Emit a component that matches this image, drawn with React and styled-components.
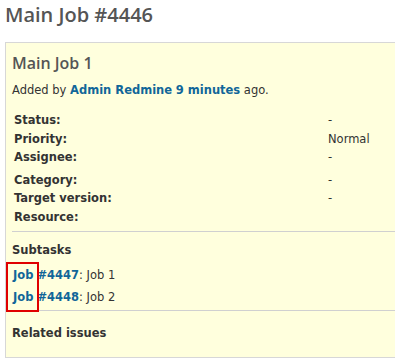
import styled, { createGlobalStyle } from "styled-components";

const Global = createGlobalStyle`
    body {
        margin: 0;
        background: #fff;
        font-family: "DejaVu Sans", Verdana, sans-serif;
        font-size: 12px;
        color: #333;
    }
`;

const Page = styled.div`
    padding: 3px 0 0 5px;
`;

const Title = styled.h2`
    margin: 0 0 15px 0;
    font-family: "Open Sans", "Trebuchet MS", sans-serif;
    font-size: 20px;
    font-weight: 600;
    color: #555;
    line-height: 24px;
`;

const IssueBox = styled.div`
    background: #ffffdd;
    border: 1px solid #d7d7d7;
    border-right: none;
    padding: 4px 0 7px 6px;
`;

const Subject = styled.h3`
    margin: 6px 0 9px 0;
    font-family: "Open Sans", "Trebuchet MS", sans-serif;
    font-size: 16px;
    font-weight: 600;
    color: #555;
    line-height: 20px;
`;

const Author = styled.p`
    margin: 0 0 14px 0;
    font-size: 11.5px;
    line-height: 16px;
`;

const Link = styled.a`
    color: #169;
    font-weight: bold;
    text-decoration: none;
`;

const Attributes = styled.div`
    display: flex;
    flex-direction: column;
    gap: ${(p) => p.$gap || 0}px;
    padding: 0 0 0 2px;
`;

const AttrGroup = styled.div`
    display: grid;
    grid-template-columns: 314px 1fr;
    row-gap: 1.5px;
`;

const Label = styled.div`
    font-weight: bold;
    font-size: 11.5px;
    line-height: 17px;
`;

const Value = styled.div`
    font-size: 11.5px;
    line-height: 17px;
`;

const Separator = styled.hr`
    border: none;
    border-top: 1px solid #d0d0d0;
    margin: 5px 0 0 0;
`;

const Section = styled.div`
    padding: ${(p) => p.$top || 10}px 0 0 0;
`;

const SectionTitle = styled.p`
    margin: 0 0 ${(p) => p.$bottom || 9}px 0;
    font-weight: bold;
    font-size: 11.5px;
    line-height: 16px;
`;

const SubtaskList = styled.div`
    position: relative;
    display: flex;
    flex-direction: column;
    gap: 6px;
    padding-left: 1px;
`;

const SubtaskRow = styled.div`
    font-size: 11.5px;
    line-height: 16px;
`;

const Highlight = styled.span`
    position: absolute;
    left: -6px;
    top: -5px;
    width: 29px;
    height: 46px;
    border: 2px solid #e00000;
`;

const attrs = [
    [
        ["Status:", "-"],
        ["Priority:", "Normal"],
        ["Assignee:", "-"],
    ],
    [
        ["Category:", "-"],
        ["Target version:", "-"],
        ["Resource:", ""],
    ],
];

const subtasks = [
    { id: 4447, subject: "Job 1" },
    { id: 4448, subject: "Job 2" },
];

export default function App() {
    return (
        <>
            <Global />
            <Page>
                <Title>Main Job #4446</Title>
                <IssueBox>
                    <Subject>Main Job 1</Subject>
                    <Author>
                        Added by <Link href="#">Admin Redmine</Link> <Link href="#">9 minutes</Link> ago.
                    </Author>
                    <Attributes $gap={5.5}>
                        {attrs.map((group, gi) => (
                            <AttrGroup key={gi}>
                                {group.map(([label, value]) => (
                                    <>
                                        <Label key={label}>{label}</Label>
                                        <Value key={label + "v"}>{value}</Value>
                                    </>
                                ))}
                            </AttrGroup>
                        ))}
                    </Attributes>
                    <Separator />
                    <Section>
                        <SectionTitle $bottom={9}>Subtasks</SectionTitle>
                        <SubtaskList>
                            <Highlight />
                            {subtasks.map((t) => (
                                <SubtaskRow key={t.id}>
                                    <Link href="#">Job #{t.id}</Link>: {t.subject}
                                </SubtaskRow>
                            ))}
                        </SubtaskList>
                    </Section>
                    <Separator />
                    <Section $top={14}>
                        <SectionTitle>Related issues</SectionTitle>
                    </Section>
                </IssueBox>
            </Page>
        </>
    );
}
